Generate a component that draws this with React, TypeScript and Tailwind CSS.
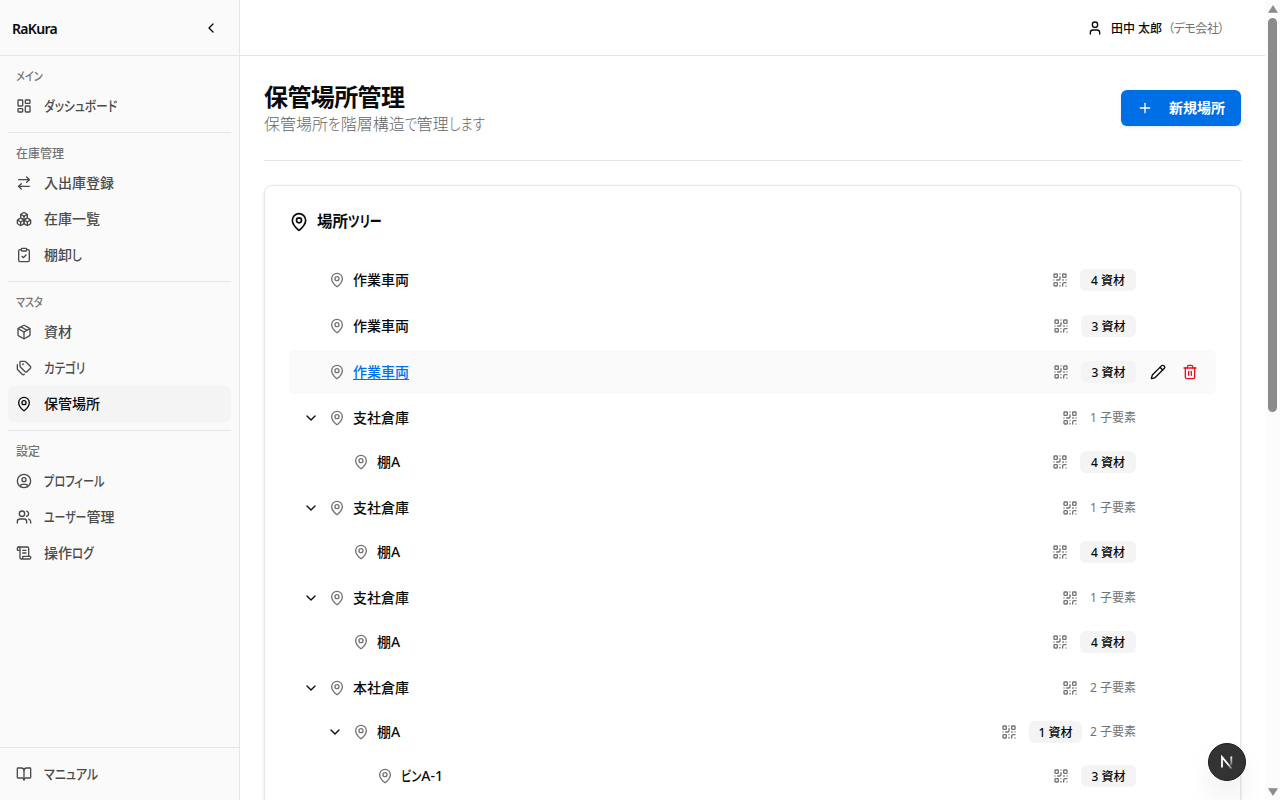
import type { ReactNode } from 'react'
import {
  ArrowRightLeft, BookOpen, Boxes, ChevronDown, ChevronLeft, CircleUser, ClipboardCheck, LayoutDashboard,
  MapPin, Package, Pencil, Plus, QrCode, ScrollText, Tags, Trash2, User, Users,
} from 'lucide-react'
import type { LucideIcon } from 'lucide-react'
import clsx from 'clsx'

type NavItem = { label: ReactNode; icon: LucideIcon; active?: boolean }
type NavGroup = { label: ReactNode; items: NavItem[] }

// Narrow kana: the CJK face sets them much wider than the UI wants
function Kana({ children, className }: { children: ReactNode; className?: string }) {
  return <span className={clsx('inline-block origin-left whitespace-nowrap', className ?? 'scale-x-[0.84]')}>{children}</span>
}

const NAV: NavGroup[] = [
  { label: <Kana>メイン</Kana>, items: [{ label: <Kana>ダッシュボード</Kana>, icon: LayoutDashboard }] },
  {
    label: '在庫管理',
    items: [
      { label: '入出庫登録', icon: ArrowRightLeft },
      { label: '在庫一覧', icon: Boxes },
      { label: <>棚卸<Kana>し</Kana></>, icon: ClipboardCheck },
    ],
  },
  {
    label: <Kana>マスタ</Kana>,
    items: [
      { label: '資材', icon: Package },
      { label: <Kana className="scale-x-[0.82]">カテゴリ</Kana>, icon: Tags },
      { label: '保管場所', icon: MapPin, active: true },
    ],
  },
  {
    label: '設定',
    items: [
      { label: <Kana className="scale-x-[0.8]">プロフィール</Kana>, icon: CircleUser },
      { label: <><Kana className="-mr-3 scale-x-[0.78]">ユーザー</Kana>管理</>, icon: Users },
      { label: <>操作<Kana className="scale-x-[0.82]">ログ</Kana></>, icon: ScrollText },
    ],
  },
]

type Location = { name: ReactNode; materials?: number; childCount?: number; children?: Location[]; hovered?: boolean }

const LOCATIONS: Location[] = [
  { name: '作業車両', materials: 4 },
  { name: '作業車両', materials: 3 },
  { name: '作業車両', materials: 3, hovered: true },
  { name: '支社倉庫', childCount: 1, children: [{ name: '棚A', materials: 4 }] },
  { name: '支社倉庫', childCount: 1, children: [{ name: '棚A', materials: 4 }] },
  { name: '支社倉庫', childCount: 1, children: [{ name: '棚A', materials: 4 }] },
  {
    name: '本社倉庫',
    childCount: 2,
    children: [
      {
        name: '棚A',
        materials: 1,
        childCount: 2,
        children: [{ name: <><Kana className="-mr-[5px] scale-x-[0.8]">ビン</Kana>A-1</>, materials: 3 }],
      },
    ],
  },
]

const INDENT = ['pl-3', 'pl-9', 'pl-15']

function NavLink({ label, icon: Icon, active }: NavItem) {
  return (
    <a
      href="#"
      className={clsx(
        'flex h-9 items-center gap-3 rounded-md px-2 text-sm font-medium',
        active ? 'bg-[#f4f4f4] text-[#0a0a0a]' : 'text-[#4a4a4a]',
      )}
    >
      <Icon size={16} className="shrink-0" />
      <span className="whitespace-nowrap">{label}</span>
    </a>
  )
}

function Sidebar() {
  return (
    <aside className="flex w-60 shrink-0 flex-col border-r border-[#e6e6e6] bg-[#fafafa]">
      <div className="flex h-14 items-center justify-between border-b border-[#e6e6e6] px-3">
        <span className="pt-0.5 text-sm font-semibold tracking-[-0.7px] text-[#0a0a0a]">RaKura</span>
        <button className="flex size-8 items-center justify-center text-[#0a0a0a]">
          <ChevronLeft size={16} />
        </button>
      </div>
      <nav className="flex-1 px-2 pt-2">
        {NAV.map((group, i) => (
          <div key={i} className={clsx(i > 0 && 'mt-2 border-t border-[#e6e6e6] pt-2')}>
            <p className="flex h-6 items-center px-2 pt-0.5 text-xs font-medium text-[#737373]">{group.label}</p>
            {group.items.map((item, j) => <NavLink key={j} {...item} />)}
          </div>
        ))}
      </nav>
      <div className="border-t border-[#e6e6e6] p-2">
        <NavLink label={<Kana className="scale-x-[0.86]">マニュアル</Kana>} icon={BookOpen} />
      </div>
    </aside>
  )
}

function LocationRow({ location, depth }: { location: Location; depth: number }) {
  const { name, materials, childCount, children, hovered } = location
  return (
    <div>
      <div className={clsx('flex h-11 items-center gap-2 rounded-md pr-3', INDENT[depth], hovered && 'bg-[#fafafa]')}>
        <span className="flex w-5 justify-center text-[#0a0a0a]">{children && <ChevronDown size={16} />}</span>
        <MapPin size={16} className="shrink-0 text-[#737373]" />
        <span className={clsx('flex-1 text-sm font-medium', hovered ? 'text-[#0070eb] underline underline-offset-2' : 'text-[#0a0a0a]')}>
          {name}
        </span>
        <span className="px-1 text-[#737373]"><QrCode size={16} /></span>
        {materials !== undefined && (
          <span
            className={clsx(
              'flex h-[22px] items-center justify-center rounded-md bg-[#f4f4f4] pt-0.5 text-xs font-medium whitespace-nowrap text-[#0a0a0a]',
              materials === 4 ? 'w-14' : materials === 1 ? 'w-[53px]' : 'w-[55px]',
            )}
          >
            {materials} 資材
          </span>
        )}
        {childCount && <span className="w-[46px] text-xs whitespace-nowrap text-[#737373]">{childCount} 子要素</span>}
        <div className={clsx('flex gap-1', !hovered && 'invisible')}>
          <button className="flex size-7 items-center justify-center text-[#0a0a0a]"><Pencil size={16} /></button>
          <button className="flex size-7 items-center justify-center text-[#ee1020]"><Trash2 size={16} /></button>
        </div>
      </div>
      {children?.map((child, i) => <LocationRow key={i} location={child} depth={depth + 1} />)}
    </div>
  )
}

function Scrollbar() {
  return (
    <div className="flex w-[15px] shrink-0 flex-col items-center justify-between bg-[#fcfcfc]">
      <div className="flex flex-col items-center gap-[5px] pt-[5px]">
        <svg width="10" height="8" viewBox="0 0 10 8" fill="#8b8b8b"><path d="M5 0.5 9.5 7.5h-9z" strokeLinejoin="round" stroke="#8b8b8b" strokeWidth="0.6" /></svg>
        <div className="h-[394px] w-[9px] rounded-full bg-[#8b8b8b]" />
      </div>
      <svg width="10" height="8" viewBox="0 0 10 8" fill="#8b8b8b" className="mb-1"><path d="M5 7.5 9.5 0.5h-9z" strokeLinejoin="round" stroke="#8b8b8b" strokeWidth="0.6" /></svg>
    </div>
  )
}

export default function App() {
  return (
    <div
      lang="ja"
      className="relative flex h-[800px] w-[1280px] overflow-hidden bg-white font-['Noto_Sans','Noto_Sans_CJK_JP',sans-serif] text-[#0a0a0a] [font-feature-settings:'palt']"
    >
      <Sidebar />
      <div className="flex min-w-0 flex-1 flex-col">
        <header className="flex h-14 shrink-0 items-center justify-end border-b border-[#e6e6e6] pr-[41px]">
          <User size={16} />
          <span className="ml-2 pt-0.5 text-xs font-medium">田中 太郎</span>
          <span className="ml-1.5 pt-0.5 text-xs tracking-[-0.45px] text-[#737373]">（デモ会社）</span>
        </header>
        <main className="min-h-0 flex-1 overflow-hidden p-6">
          <div className="flex items-center justify-between border-b border-[#e6e6e6] pb-6">
            <div>
              <h1 className="relative top-px text-2xl font-semibold tracking-tight">保管場所管理</h1>
              <p className="text-base font-light text-[#666666]">
                保管場所<Kana className="-mr-[2px] scale-x-[0.85]">を</Kana>階層構造
                <Kana className="-mr-[3px] scale-x-[0.82]">で</Kana>管理<Kana>します</Kana>
              </p>
            </div>
            <button className="flex h-9 w-[120px] items-center rounded-md bg-[#006fe6] pl-4 text-sm font-bold text-white shadow-sm">
              <Plus size={16} className="mr-4" />
              新規場所
            </button>
          </div>
          <section className="mt-6 h-[640px] rounded-lg border border-[#e6e6e6] p-6 shadow-sm">
            <h2 className="mb-6 flex h-6 items-center gap-2 text-base font-semibold">
              <MapPin size={20} />
              <span className="text-[15.5px]">場所<Kana className="scale-x-[0.78]">ツリー</Kana></span>
            </h2>
            <div className="space-y-0.5">
              {LOCATIONS.map((location, i) => <LocationRow key={i} location={location} depth={0} />)}
            </div>
          </section>
        </main>
      </div>
      <Scrollbar />
      <div className="absolute top-[743px] left-[1208px] flex size-[38px] items-center justify-center rounded-full border border-[#1a1a1a] bg-[#333333] shadow-[0_16px_32px_-8px_rgba(0,0,0,0.2)]">
        <svg width="14" height="14" viewBox="0 0 14 14" fill="none" strokeWidth="1.8">
          <defs>
            <linearGradient id="diagonal" gradientUnits="userSpaceOnUse" x1="8" y1="9" x2="12.5" y2="14">
              <stop stopColor="white" />
              <stop offset="1" stopColor="white" stopOpacity="0.2" />
            </linearGradient>
            <linearGradient id="stem" gradientUnits="userSpaceOnUse" x1="12" y1="1" x2="12" y2="11">
              <stop stopColor="white" />
              <stop offset="1" stopColor="white" stopOpacity="0.2" />
            </linearGradient>
          </defs>
          <path d="M2 12.5V2L11.5 13.5" stroke="url(#diagonal)" />
          <path d="M11.3 1.5V10" stroke="url(#stem)" />
        </svg>
      </div>
    </div>
  )
}
